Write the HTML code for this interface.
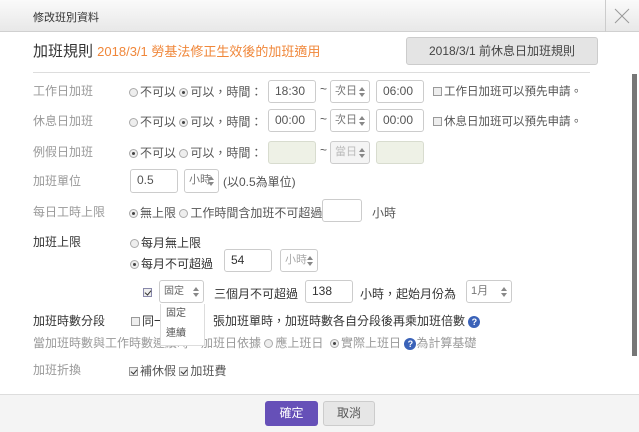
<!DOCTYPE html>
<html><head><meta charset="utf-8"><style>
*{box-sizing:border-box;margin:0;padding:0}
body{width:639px;height:432px;overflow:hidden;background:#fff;font-family:"Liberation Sans","Noto Sans CJK TC",sans-serif;font-size:12px;color:#555;position:relative}
.a{position:absolute;white-space:nowrap}
.lbl{color:#999;font-size:12px}
.inp{position:absolute;border:1px solid #ccc;border-radius:3px;background:#fff;height:23px;padding-left:6px;line-height:21px;font-size:12px;color:#555}
.sel{position:absolute;border:1px solid #ccc;border-radius:3px;background:#fff;height:23px;padding-left:4px;line-height:21px;font-size:11px;color:#777}
.sel:after{content:"";position:absolute;right:4px;top:6px;border:3px solid transparent;border-bottom:4px solid #888;border-top:0}
.sel:before{content:"";position:absolute;right:4px;top:12px;border:3px solid transparent;border-top:4px solid #888;border-bottom:0}
.dis{background:#eef1e6;border-color:#d8dccf}
.r{display:inline-block;width:9px;height:9px;border:1px solid #aaa;border-radius:50%;background:#eee;vertical-align:-1px;margin-right:2px;position:relative}
.r.on:after{content:"";position:absolute;left:2px;top:2px;width:3px;height:3px;border-radius:50%;background:#444}
.cb{display:inline-block;width:9px;height:9px;border:1px solid #999;background:#eee;vertical-align:-1px;margin-right:2px;position:relative}
.cb.on:after{content:"";position:absolute;left:2px;top:0;width:3px;height:5px;border:solid #333;border-width:0 1.5px 1.5px 0;transform:rotate(40deg)}
.q{display:inline-block;width:12px;height:12px;border-radius:50%;background:#3a62b8;color:#fff;font-size:9px;font-weight:bold;text-align:center;line-height:12px;vertical-align:0}
</style></head><body>
<div class="a" style="left:0;top:0;width:639px;height:32px;background:linear-gradient(#fafafa,#e8e8e8);border-bottom:1px solid #d0d0d0"></div>
<div class="a" style="left:33px;top:9px;font-size:11px;color:#333">修改班別資料</div>
<div class="a" style="left:605px;top:0;width:1px;height:32px;background:#ccc"></div>
<svg class="a" style="left:614px;top:8px" width="16" height="16"><path d="M1 1L15 15M15 1L1 15" stroke="#999" stroke-width="1"/></svg>
<div class="a" style="left:33px;top:40px;font-size:15px;color:#333">加班規則 <span style="color:#f0873a;font-size:13px">2018/3/1 勞基法修正生效後的加班適用</span></div>
<div class="a" style="left:406px;top:37px;width:192px;height:28px;background:#e4e4e4;border:1px solid #ccc;border-radius:3px;text-align:center;line-height:26px;font-size:12px;color:#444">2018/3/1 前休息日加班規則</div>
<div class="a" style="left:33px;top:72px;width:557px;height:1px;background:#ddd"></div>
<div class="a" style="left:632px;top:74px;width:5px;height:282px;background:#777"></div>

<div class="a lbl" style="left:33px;top:82px">工作日加班</div>
<div class="a" style="left:129px;top:83px"><i class="r"></i>不可以 <i class="r on"></i>可以，時間：</div>
<div class="inp" style="left:268px;top:80px;width:48px">18:30</div>
<div class="a" style="left:320px;top:82px">~</div>
<div class="sel" style="left:330px;top:80px;width:40px">次日</div>
<div class="inp" style="left:376px;top:80px;width:48px">06:00</div>
<div class="a" style="left:433px;top:83px;font-size:11.5px"><i class="cb"></i>工作日加班可以預先申請。</div>

<div class="a lbl" style="left:33px;top:112px">休息日加班</div>
<div class="a" style="left:129px;top:113px"><i class="r"></i>不可以 <i class="r on"></i>可以，時間：</div>
<div class="inp" style="left:268px;top:109px;width:48px">00:00</div>
<div class="a" style="left:320px;top:112px">~</div>
<div class="sel" style="left:330px;top:109px;width:40px">次日</div>
<div class="inp" style="left:376px;top:109px;width:48px">00:00</div>
<div class="a" style="left:433px;top:113px;font-size:11.5px"><i class="cb"></i>休息日加班可以預先申請。</div>

<div class="a lbl" style="left:33px;top:143px">例假日加班</div>
<div class="a" style="left:129px;top:144px"><i class="r on"></i>不可以 <i class="r"></i>可以，時間：</div>
<div class="inp dis" style="left:268px;top:141px;width:48px"></div>
<div class="a" style="left:320px;top:143px">~</div>
<div class="sel" style="left:330px;top:141px;width:40px;color:#bbb;background:#f4f4f4">當日</div>
<div class="inp dis" style="left:376px;top:141px;width:48px"></div>

<div class="a lbl" style="left:33px;top:172px">加班單位</div>
<div class="inp" style="left:130px;top:169px;width:48px;height:24px">0.5</div>
<div class="sel" style="left:184px;top:169px;width:35px;height:24px">小時</div>
<div class="a" style="left:223px;top:173px">(以0.5為單位)</div>

<div class="a lbl" style="left:33px;top:203px">每日工時上限</div>
<div class="a" style="left:129px;top:204px"><i class="r on"></i>無上限 <i class="r"></i>工作時間含加班不可超過</div>
<div class="inp" style="left:322px;top:199px;width:40px"></div>
<div class="a" style="left:372px;top:204px">小時</div>

<div class="a" style="left:33px;top:233px;color:#333">加班上限</div>
<div class="a" style="left:130px;top:234px;color:#333"><i class="r"></i>每月無上限</div>
<div class="a" style="left:130px;top:255px;color:#333"><i class="r on"></i>每月不可超過</div>
<div class="inp" style="left:224px;top:249px;width:48px;color:#333">54</div>
<div class="sel" style="left:280px;top:249px;width:38px;color:#aaa">小時</div>

<div class="a" style="left:143px;top:285px"><i class="cb on" style="border-color:#88a"></i></div>
<div class="sel" style="left:159px;top:280px;width:45px;font-size:10px;color:#666">固定</div>
<div class="a" style="left:214px;top:285px;color:#333">三個月不可超過</div>
<div class="inp" style="left:305px;top:280px;width:48px;color:#333">138</div>
<div class="a" style="left:360px;top:285px;color:#333">小時，起始月份為</div>
<div class="sel" style="left:466px;top:280px;width:46px;font-size:11px">1月</div>

<div class="a" style="left:33px;top:312px;color:#333">加班時數分段</div>
<div class="a" style="left:131px;top:312px;color:#333"><i class="cb"></i>同一<span style="padding-left:47px">張加班單時，加班時數各自分段後再乘加班倍數</span> <span class="q">?</span></div>
<div class="a lbl" style="left:33px;top:334px">當加班時數與工作時數連續時，加班日依據 <i class="r"></i>應上班日 &nbsp;<i class="r on"></i>實際上班日 <span class="q">?</span>為計算基礎</div>
<div class="a" style="left:160px;top:304px;width:45px;height:42px;background:#fff;border:1px solid #ddd;border-top:0;font-size:10px;color:#555;padding-left:5px;line-height:20px">固定<br>連續</div>

<div class="a lbl" style="left:33px;top:361px">加班折換</div>
<div class="a" style="left:129px;top:362px;color:#555"><i class="cb on"></i>補休假 <i class="cb on"></i>加班費</div>

<div class="a" style="left:0;top:394px;width:639px;height:38px;background:#f4f4f4;border-top:1px solid #ddd"></div>
<div class="a" style="left:265px;top:401px;width:53px;height:25px;background:#6650b8;border-radius:3px;color:#fff;text-align:center;line-height:25px">確定</div>
<div class="a" style="left:323px;top:401px;width:52px;height:25px;background:#e6e6e6;border:1px solid #ccc;border-radius:3px;color:#555;text-align:center;line-height:23px">取消</div>
</body></html>
